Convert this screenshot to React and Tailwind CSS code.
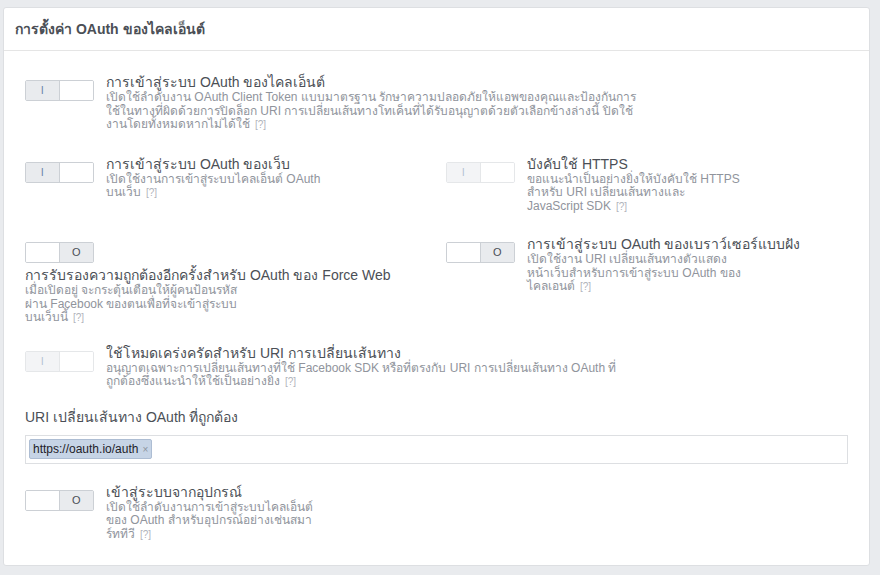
// OAuth client settings panel
const Toggle = ({ on, disabled }) => (
  <div
    className={`flex w-[69px] h-[21px] shrink-0 border border-[#ccd0d5] rounded-[2px] overflow-hidden text-[11px] leading-[19px] text-center ${
      disabled ? 'opacity-50' : ''
    }`}
  >
    {/* left half shows "I" when on, right half shows "O" when off */}
    <div className={`w-1/2 border-r border-[#ccd0d5] ${on ? 'bg-[#e9ebee] text-[#6e86ad]' : 'bg-white'}`}>
      {on ? 'I' : ''}
    </div>
    <div className={`w-1/2 ${on ? 'bg-white' : 'bg-[#e9ebee] text-[#4b4f56]'}`}>{on ? '' : 'O'}</div>
  </div>
);

const Help = () => <span className="ml-[5px] text-[10px] text-[#b0b4bb]">[?]</span>;

const Desc = ({ lines }) => (
  <div className="text-[12px] leading-[13.5px] text-[#90949c] whitespace-nowrap">
    {lines.map((l, i) => (
      <div key={i}>
        {l}
        {i === lines.length - 1 && <Help />}
      </div>
    ))}
  </div>
);

const Item = ({ on, disabled, title, lines }) => (
  <div className="flex gap-[12px]">
    <div className="pt-[6px]">
      <Toggle on={on} disabled={disabled} />
    </div>
    <div>
      <div className="text-[14px] leading-[17px] text-[#4b4f56] whitespace-nowrap">{title}</div>
      <Desc lines={lines} />
    </div>
  </div>
);

export default function App() {
  return (
    <div
      className="w-[880px] h-[575px] bg-[#e9ebee] pt-[7px] pl-[3px]"
      style={{ fontFamily: '"Liberation Sans", "DejaVu Sans", sans-serif' }}
    >
      <div className="w-[867px] h-[559px] bg-white border border-[#dddfe2] rounded-[3px]">
        {/* header */}
        <div className="h-[43px] flex items-center px-[11px] border-b border-[#e5e5e5]">
          <span className="text-[14px] font-bold text-[#4b4f56]">การตั้งค่า OAuth ของไคลเอ็นต์</span>
        </div>

        <div className="pl-[21px] pt-[23px] pr-[19px]">
          <Item
            on
            title="การเข้าสู่ระบบ OAuth ของไคลเอ็นต์"
            lines={[
              'เปิดใช้ลำดับงาน OAuth Client Token แบบมาตรฐาน รักษาความปลอดภัยให้แอพของคุณและป้องกันการ',
              'ใช้ในทางที่ผิดด้วยการปิดล็อก URI การเปลี่ยนเส้นทางโทเค็นที่ได้รับอนุญาตด้วยตัวเลือกข้างล่างนี้ ปิดใช้',
              'งานโดยทั้งหมดหากไม่ได้ใช้',
            ]}
          />

          <div className="grid grid-cols-[421px_1fr] mt-[24px]">
            <Item
              on
              title="การเข้าสู่ระบบ OAuth ของเว็บ"
              lines={['เปิดใช้งานการเข้าสู่ระบบไคลเอ็นต์ OAuth', 'บนเว็บ']}
            />
            <Item
              on
              disabled
              title="บังคับใช้ HTTPS"
              lines={['ขอแนะนำเป็นอย่างยิ่งให้บังคับใช้ HTTPS', 'สำหรับ URI เปลี่ยนเส้นทางและ', 'JavaScript SDK']}
            />
          </div>

          <div className="grid grid-cols-[421px_1fr] mt-[23px]">
            <div className="pt-[6px]">
              <Toggle />
              <div className="mt-[4px] text-[14px] leading-[17px] text-[#4b4f56] whitespace-nowrap">
                การรับรองความถูกต้องอีกครั้งสำหรับ OAuth ของ Force Web
              </div>
              <Desc
                lines={['เมื่อเปิดอยู่ จะกระตุ้นเตือนให้ผู้คนป้อนรหัส', 'ผ่าน Facebook ของตนเพื่อที่จะเข้าสู่ระบบ', 'บนเว็บนี้']}
              />
            </div>
            <Item
              title="การเข้าสู่ระบบ OAuth ของเบราว์เซอร์แบบฝัง"
              lines={['เปิดใช้งาน URI เปลี่ยนเส้นทางตัวแสดง', 'หน้าเว็บสำหรับการเข้าสู่ระบบ OAuth ของ', 'ไคลเอนต์']}
            />
          </div>

          <div className="mt-[20px]">
            <Item
              on
              disabled
              title="ใช้โหมดเคร่งครัดสำหรับ URI การเปลี่ยนเส้นทาง"
              lines={[
                'อนุญาตเฉพาะการเปลี่ยนเส้นทางที่ใช้ Facebook SDK หรือที่ตรงกับ URI การเปลี่ยนเส้นทาง OAuth ที่',
                'ถูกต้องซึ่งแนะนำให้ใช้เป็นอย่างยิ่ง',
              ]}
            />
          </div>

          {/* redirect URIs */}
          <div className="mt-[20px] text-[14px] leading-[16px] text-[#4b4f56]">URI เปลี่ยนเส้นทาง OAuth ที่ถูกต้อง</div>
          <div className="mt-[10px] w-[823px] h-[29px] border border-[#dddfe2] flex items-center px-[3px]">
            <span className="flex items-center h-[20px] px-[3px] bg-[#c6d4e6] border border-[#adbdd3] rounded-[2px] text-[12px] text-[#1d2129]">
              https://oauth.io/auth
              <span className="ml-[4px] text-[10px] text-[#8d949e]">×</span>
            </span>
          </div>

          <div className="mt-[20px]">
            <Item
              title="เข้าสู่ระบบจากอุปกรณ์"
              lines={['เปิดใช้ลำดับงานการเข้าสู่ระบบไคลเอ็นต์', 'ของ OAuth สำหรับอุปกรณ์อย่างเช่นสมา', 'ร์ททีวี']}
            />
          </div>
        </div>
      </div>
    </div>
  );
}
